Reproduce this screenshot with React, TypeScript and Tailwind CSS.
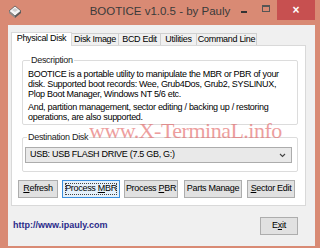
import { ReactNode } from "react";

const AppIcon = () => (
  <svg width="14" height="14" viewBox="0 0 14 14">
    <polygon points="7,1 13,6 7,11 1,6" fill="#f4f4f4" stroke="#555" strokeWidth="0.8" />
    <polygon points="1,6 7,11 7,13 1,8" fill="#8a8a8a" />
    <polygon points="13,6 7,11 7,13 13,8" fill="#5a5a5a" />
    <polygon points="4,5 7,3 10,5 7,7" fill="#cfcfcf" />
  </svg>
);

const tabs = [
  { title: "Physical Disk", w: "w-[61px]", active: true },
  { title: "Disk Image", w: "w-[48px]" },
  { title: "BCD Edit", w: "w-[43px]" },
  { title: "Utilities", w: "w-[37px]" },
  { title: "Command Line", w: "w-[61px]" },
];

const Btn = ({
  children,
  className = "",
  focused = false,
}: {
  children: ReactNode;
  className?: string;
  focused?: boolean;
}) => (
  <div
    className={`relative h-[18px] flex items-center justify-center border text-[9px] tracking-[-0.3px] whitespace-nowrap text-black ${
      focused ? "bg-[#e5f1fb] border-[#3c8fdc]" : "bg-[#e1e1e1] border-[#adadad]"
    } ${className}`}
  >
    {focused && <div className="absolute inset-[2px] border border-dotted border-[#444]" />}
    <span className="relative">{children}</span>
  </div>
);

const U = ({ children }: { children: ReactNode }) => <span className="underline underline-offset-1">{children}</span>;

export default function App() {
  return (
    <div className="w-[320px] h-[248px] bg-[#d98a74] flex flex-col overflow-hidden font-['Liberation_Sans',Arial,sans-serif]">
      {/* title bar */}
      <div className="h-[25px] shrink-0 grid grid-cols-[1fr_auto_1fr]">
        <div className="flex items-center pl-[8px] pb-[1px]">
          <AppIcon />
        </div>
        <div className="flex items-center text-[11.5px] text-[#3a3a3a] pb-[1px]">BOOTICE v1.0.5 - by Pauly</div>
        <div className="flex justify-end items-start pr-[5px]">
          <div className="w-[22px] h-[20px] flex items-center justify-center">
            <div className="w-[6px] h-[2px] bg-[#333] mt-[3px]" />
          </div>
          <div className="w-[22px] h-[20px] flex items-center justify-center">
            <div className="w-[8px] h-[7px] border border-[#555] border-t-2 mb-[3px]" />
          </div>
          <div className="w-[38px] h-[20px] bg-[#c75050] flex items-center justify-center text-white text-[12px] font-bold">
            ×
          </div>
        </div>
      </div>

      {/* client area */}
      <div className="flex-1 ml-[8px] mr-[5px] mb-[2px] bg-[#f0f0f0] flex flex-col">
        {/* tab strip */}
        <div className="flex items-end pt-[6px] pl-[3px] h-[20px]">
          {tabs.map((t) => (
            <div
              key={t.title}
              className={`${t.w} flex items-center justify-center text-[9px] tracking-[-0.3px] whitespace-nowrap text-black border border-b-0 ${
                t.active
                  ? "h-[14px] bg-white border-[#d9d9d9] relative z-10 mb-[-1px] pb-[1px]"
                  : "h-[12px] bg-[#f0f0f0] border-[#d0d0d0] -ml-px"
              }`}
            >
              {t.title}
            </div>
          ))}
        </div>

        {/* tab panel */}
        <div className="relative ml-[3px] w-[295px] h-[161px] bg-white border border-[#d9d9d9] pl-[10px] pr-[7px] pt-[9px] flex flex-col">
          <fieldset className="border border-[#dcdcdc] rounded-[2px] pl-[5px] pr-[4px] pb-[2px]">
            <legend className="ml-[2px] px-[1px] text-[9px] tracking-[-0.3px] leading-[11px] text-[#222]">Description</legend>
            <div className="pt-[3px] text-[9px] tracking-[-0.3px] leading-[10px] text-black whitespace-nowrap">
              <p>
                BOOTICE is a portable utility to manipulate the MBR or PBR of your
                <br />
                disk. Supported boot records: Wee, Grub4Dos, Grub2, SYSLINUX,
                <br />
                Plop Boot Manager, Windows NT 5/6 etc.
              </p>
              <p className="mt-[3px]">
                And, partition management, sector editing / backing up / restoring
                <br />
                operations, are also supported.
              </p>
            </div>
          </fieldset>

          <fieldset className="mt-[7px] border border-[#dcdcdc] rounded-[2px] pl-[2px] pr-[5px] pb-[8px]">
            <legend className="ml-[2px] px-[1px] text-[9px] tracking-[-0.3px] leading-[11px] text-[#222]">Destination Disk</legend>
            <div className="mt-[4px] h-[16px] border border-[#acacac] bg-[#e9e9e9] flex items-center pl-[4px] pr-[5px] text-[9px] tracking-[-0.3px] text-black">
              <span className="flex-1">USB: USB FLASH DRIVE (7.5 GB, G:)</span>
              <svg width="7" height="5" viewBox="0 0 7 5">
                <polyline points="1,1 3.5,3.5 6,1" fill="none" stroke="#444" strokeWidth="1.1" />
              </svg>
            </div>
          </fieldset>

          <div className="mt-[8px] -ml-[4px] flex items-center">
            <Btn className="w-[40px]">
              <U>R</U>efresh
            </Btn>
            <Btn focused className="w-[58px] ml-[4px]">
              Process <U>M</U>BR
            </Btn>
            <Btn className="w-[54px] ml-[4px]">
              Process <U>P</U>BR
            </Btn>
            <Btn className="w-[58px] ml-[6px]">Parts Manage</Btn>
            <Btn className="w-[48px] ml-[5px]">
              <U>S</U>ector Edit
            </Btn>
          </div>

          {/* watermark */}
          <div className="absolute left-[77px] top-[74px] font-['Liberation_Serif',serif] text-[22px] leading-[22px] tracking-[-0.5px] text-[#e05050] opacity-55 whitespace-nowrap pointer-events-none">
            www.X-TerminaL.info
          </div>
        </div>

        {/* footer */}
        <div className="flex items-center justify-between mt-[11px] pl-[5px] pr-[17px]">
          <span className="text-[9px] font-bold text-[#2b2b8a]">http://www.ipauly.com</span>
          <Btn className="w-[38px]">
            E<U>x</U>it
          </Btn>
        </div>
      </div>
    </div>
  );
}
